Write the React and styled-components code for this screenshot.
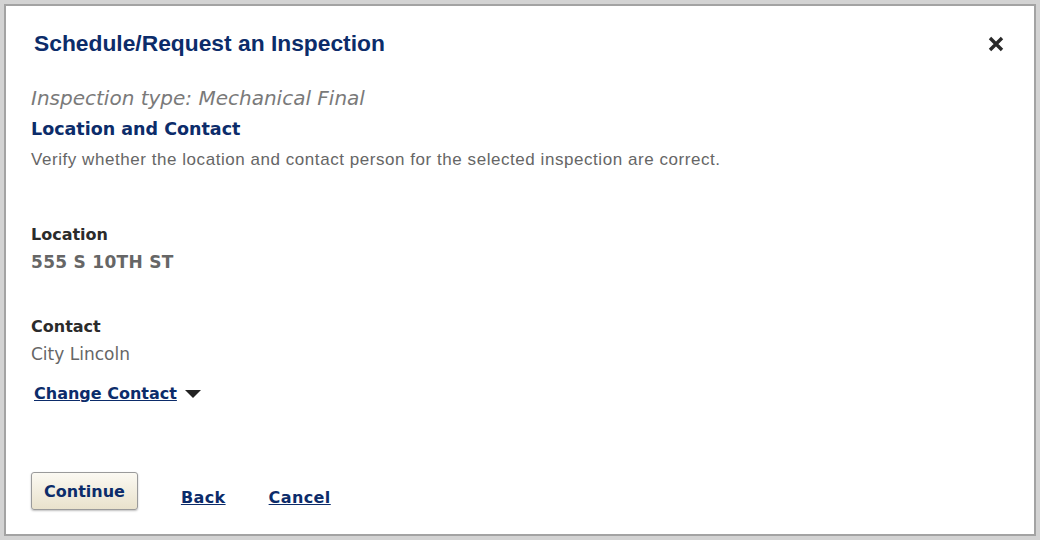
import React from "react";
import styled, { createGlobalStyle } from "styled-components";

const GlobalStyle = createGlobalStyle`
  html, body {
    margin: 0;
    padding: 0;
    background: #d3d3d3;
  }
`;

const Page = styled.div`
  width: 1040px;
  height: 540px;
  padding: 4px;
  box-sizing: border-box;
  background: #d3d3d3;
`;

const Modal = styled.div`
  height: 100%;
  box-sizing: border-box;
  background: #fff;
  border: 2px solid #a3a3a3;
  display: flex;
  flex-direction: column;
  padding: 24px 28px 0 25px;
`;

const Header = styled.div`
  display: flex;
  justify-content: space-between;
  align-items: center;
  height: 26px;
  padding-left: 3px;
`;

const Title = styled.h2`
  margin: 0;
  font: bold 22.8px/26px "Liberation Sans", Arial, sans-serif;
  color: #0c2c6a;
`;

const Close = styled.button`
  border: 0;
  background: none;
  padding: 0;
  width: 20px;
  height: 20px;
  display: flex;
  align-items: center;
  justify-content: center;
  cursor: pointer;
  margin-top: 2px;
`;

const TypeLine = styled.div`
  margin-top: 30px;
  font: italic 20px/24px "DejaVu Sans", Verdana, sans-serif;
  color: #7a7a7a;
`;

const Section = styled.div`
  margin-top: 9px;
  font: bold 17.5px/20px "DejaVu Sans", Verdana, sans-serif;
  color: #0c2c6a;
`;

const Hint = styled.p`
  margin: 11px 0 0;
  font: 17px/20px "Liberation Sans", Arial, sans-serif;
  letter-spacing: 0.55px;
  color: #666;
`;

const Field = styled.div`
  margin-top: ${(p) => p.gap}px;
`;

const Label = styled.div`
  font: bold 16px/20px "DejaVu Sans", Verdana, sans-serif;
  color: #2b2b2b;
`;

const Value = styled.div`
  margin-top: 7px;
  font: ${(p) => (p.bold ? "bold" : "normal")} 17px/20px "DejaVu Sans", Verdana, sans-serif;
  letter-spacing: ${(p) => (p.bold ? "0.3px" : "0")};
  color: #666;
`;

const ChangeLink = styled.a`
  margin-top: 20px;
  margin-left: 3px;
  display: inline-flex;
  align-items: center;
  gap: 8px;
  font: bold 16px/20px "DejaVu Sans", Verdana, sans-serif;
  color: #0c2c6a;
  cursor: pointer;
  span {
    text-decoration: underline;
  }
`;

const Actions = styled.div`
  margin-top: 68px;
  display: flex;
  align-items: flex-start;
`;

const Button = styled.button`
  height: 38px;
  padding: 0 12px;
  border: 1px solid #9a9a9a;
  border-radius: 3px;
  background: linear-gradient(#fbf9f2, #e9e2cc);
  box-shadow: 0 1px 2px rgba(0, 0, 0, 0.25);
  font: bold 16px "DejaVu Sans", Verdana, sans-serif;
  color: #0c2c6a;
  cursor: pointer;
`;

const Link = styled.a`
  margin-top: 16px;
  margin-left: ${(p) => p.offset}px;
  font: bold 16px/20px "DejaVu Sans", Verdana, sans-serif;
  letter-spacing: 0.4px;
  color: #0c2c6a;
  text-decoration: underline;
  cursor: pointer;
`;

export default function App() {
  return (
    <>
      <GlobalStyle />
      <Page>
        <Modal>
          <Header>
            <Title>Schedule/Request an Inspection</Title>
            <Close aria-label="Close">
              <svg width="18" height="18" viewBox="0 0 18 18">
                <path d="M3 3 L15 15 M15 3 L3 15" stroke="#2a2a2a" strokeWidth="3.4" />
              </svg>
            </Close>
          </Header>
          <TypeLine>Inspection type: Mechanical Final</TypeLine>
          <Section>Location and Contact</Section>
          <Hint>Verify whether the location and contact person for the selected inspection are correct.</Hint>
          <Field gap={55}>
            <Label>Location</Label>
            <Value bold>555 S 10TH ST</Value>
          </Field>
          <Field gap={45}>
            <Label>Contact</Label>
            <Value>City Lincoln</Value>
          </Field>
          <div>
            <ChangeLink>
              <span>Change Contact</span>
              <svg width="16" height="8" viewBox="0 0 16 8">
                <path d="M0 0 H16 L8 8 Z" fill="#222" />
              </svg>
            </ChangeLink>
          </div>
          <Actions>
            <Button>Continue</Button>
            <Link offset={43}>Back</Link>
            <Link offset={43}>Cancel</Link>
          </Actions>
        </Modal>
      </Page>
    </>
  );
}
